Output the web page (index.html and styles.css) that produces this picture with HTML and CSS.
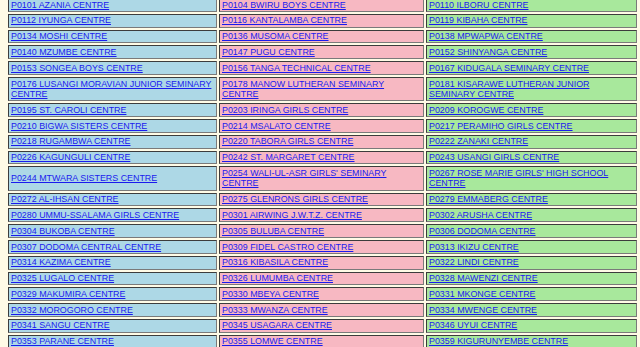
FILE: index.html
```html
<!DOCTYPE html>
<html>
<head>
<meta charset="utf-8">
<link rel="stylesheet" href="styles.css">
</head>
<body>
<table class="centres">
<colgroup><col class="c1"><col class="c2"><col class="c3"></colgroup>
<tr><td class="b"><a href="#">P0101 AZANIA CENTRE</a></td><td class="p"><a href="#">P0104 BWIRU BOYS CENTRE</a></td><td class="g"><a href="#">P0110 ILBORU CENTRE</a></td></tr>
<tr><td class="b"><a href="#">P0112 IYUNGA CENTRE</a></td><td class="p"><a href="#">P0116 KANTALAMBA CENTRE</a></td><td class="g"><a href="#">P0119 KIBAHA CENTRE</a></td></tr>
<tr><td class="b"><a href="#">P0134 MOSHI CENTRE</a></td><td class="p"><a href="#">P0136 MUSOMA CENTRE</a></td><td class="g"><a href="#">P0138 MPWAPWA CENTRE</a></td></tr>
<tr><td class="b"><a href="#">P0140 MZUMBE CENTRE</a></td><td class="p"><a href="#">P0147 PUGU CENTRE</a></td><td class="g"><a href="#">P0152 SHINYANGA CENTRE</a></td></tr>
<tr><td class="b"><a href="#">P0153 SONGEA BOYS CENTRE</a></td><td class="p"><a href="#">P0156 TANGA TECHNICAL CENTRE</a></td><td class="g"><a href="#">P0167 KIDUGALA SEMINARY CENTRE</a></td></tr>
<tr><td class="b"><a href="#">P0176 LUSANGI MORAVIAN JUNIOR SEMINARY CENTRE</a></td><td class="p"><a href="#">P0178 MANOW LUTHERAN SEMINARY CENTRE</a></td><td class="g"><a href="#">P0181 KISARAWE LUTHERAN JUNIOR SEMINARY CENTRE</a></td></tr>
<tr><td class="b"><a href="#">P0195 ST. CAROLI CENTRE</a></td><td class="p"><a href="#">P0203 IRINGA GIRLS CENTRE</a></td><td class="g"><a href="#">P0209 KOROGWE CENTRE</a></td></tr>
<tr><td class="b"><a href="#">P0210 BIGWA SISTERS CENTRE</a></td><td class="p"><a href="#">P0214 MSALATO CENTRE</a></td><td class="g"><a href="#">P0217 PERAMIHO GIRLS CENTRE</a></td></tr>
<tr><td class="b"><a href="#">P0218 RUGAMBWA CENTRE</a></td><td class="p"><a href="#">P0220 TABORA GIRLS CENTRE</a></td><td class="g"><a href="#">P0222 ZANAKI CENTRE</a></td></tr>
<tr><td class="b"><a href="#">P0226 KAGUNGULI CENTRE</a></td><td class="p"><a href="#">P0242 ST. MARGARET CENTRE</a></td><td class="g"><a href="#">P0243 USANGI GIRLS CENTRE</a></td></tr>
<tr><td class="b"><a href="#">P0244 MTWARA SISTERS CENTRE</a></td><td class="p"><a href="#">P0254 WALI-UL-ASR GIRLS' SEMINARY CENTRE</a></td><td class="g"><a href="#">P0267 ROSE MARIE GIRLS' HIGH SCHOOL CENTRE</a></td></tr>
<tr><td class="b"><a href="#">P0272 AL-IHSAN CENTRE</a></td><td class="p"><a href="#">P0275 GLENRONS GIRLS CENTRE</a></td><td class="g"><a href="#">P0279 EMMABERG CENTRE</a></td></tr>
<tr><td class="b"><a href="#">P0280 UMMU-SSALAMA GIRLS CENTRE</a></td><td class="p"><a href="#">P0301 AIRWING J.W.T.Z. CENTRE</a></td><td class="g"><a href="#">P0302 ARUSHA CENTRE</a></td></tr>
<tr><td class="b"><a href="#">P0304 BUKOBA CENTRE</a></td><td class="p"><a href="#">P0305 BULUBA CENTRE</a></td><td class="g"><a href="#">P0306 DODOMA CENTRE</a></td></tr>
<tr><td class="b"><a href="#">P0307 DODOMA CENTRAL CENTRE</a></td><td class="p"><a href="#">P0309 FIDEL CASTRO CENTRE</a></td><td class="g"><a href="#">P0313 IKIZU CENTRE</a></td></tr>
<tr><td class="b"><a href="#">P0314 KAZIMA CENTRE</a></td><td class="p"><a href="#">P0316 KIBASILA CENTRE</a></td><td class="g"><a href="#">P0322 LINDI CENTRE</a></td></tr>
<tr><td class="b"><a href="#">P0325 LUGALO CENTRE</a></td><td class="p"><a href="#">P0326 LUMUMBA CENTRE</a></td><td class="g"><a href="#">P0328 MAWENZI CENTRE</a></td></tr>
<tr><td class="b"><a href="#">P0329 MAKUMIRA CENTRE</a></td><td class="p"><a href="#">P0330 MBEYA CENTRE</a></td><td class="g"><a href="#">P0331 MKONGE CENTRE</a></td></tr>
<tr><td class="b"><a href="#">P0332 MOROGORO CENTRE</a></td><td class="p"><a href="#">P0333 MWANZA CENTRE</a></td><td class="g"><a href="#">P0334 MWENGE CENTRE</a></td></tr>
<tr><td class="b"><a href="#">P0341 SANGU CENTRE</a></td><td class="p"><a href="#">P0345 USAGARA CENTRE</a></td><td class="g"><a href="#">P0346 UYUI CENTRE</a></td></tr>
<tr><td class="b"><a href="#">P0353 PARANE CENTRE</a></td><td class="p"><a href="#">P0355 LOMWE CENTRE</a></td><td class="g"><a href="#">P0359 KIGURUNYEMBE CENTRE</a></td></tr>
</table>
</body>
</html>
```

FILE: styles.css
```css
html, body {
  margin: 0;
  padding: 0;
  background: #fffbe6;
}

body {
  font-family: "Liberation Sans", Arial, sans-serif;
  font-size: 8.9px;
}

.centres {
  margin: -4px 0 0 6px;
  width: 633px;
  table-layout: fixed;
  border-collapse: separate;
  border-spacing: 2px;
}

.c1 { width: 209px; }
.c2 { width: 205px; }
.c3 { width: 211px; }

.centres td {
  padding: 0.65px 2px;
  line-height: 10.5px;
  border: 1px solid;
  border-color: #3c3c3c #7a7a7a #7a7a7a #3c3c3c;
  vertical-align: middle;
}

.b { background: #add8e6; }
.p { background: #f7b8c2; }
.g { background: #a8e89c; }

.centres a {
  color: #1a1aee;
  text-decoration: underline;
}
```
